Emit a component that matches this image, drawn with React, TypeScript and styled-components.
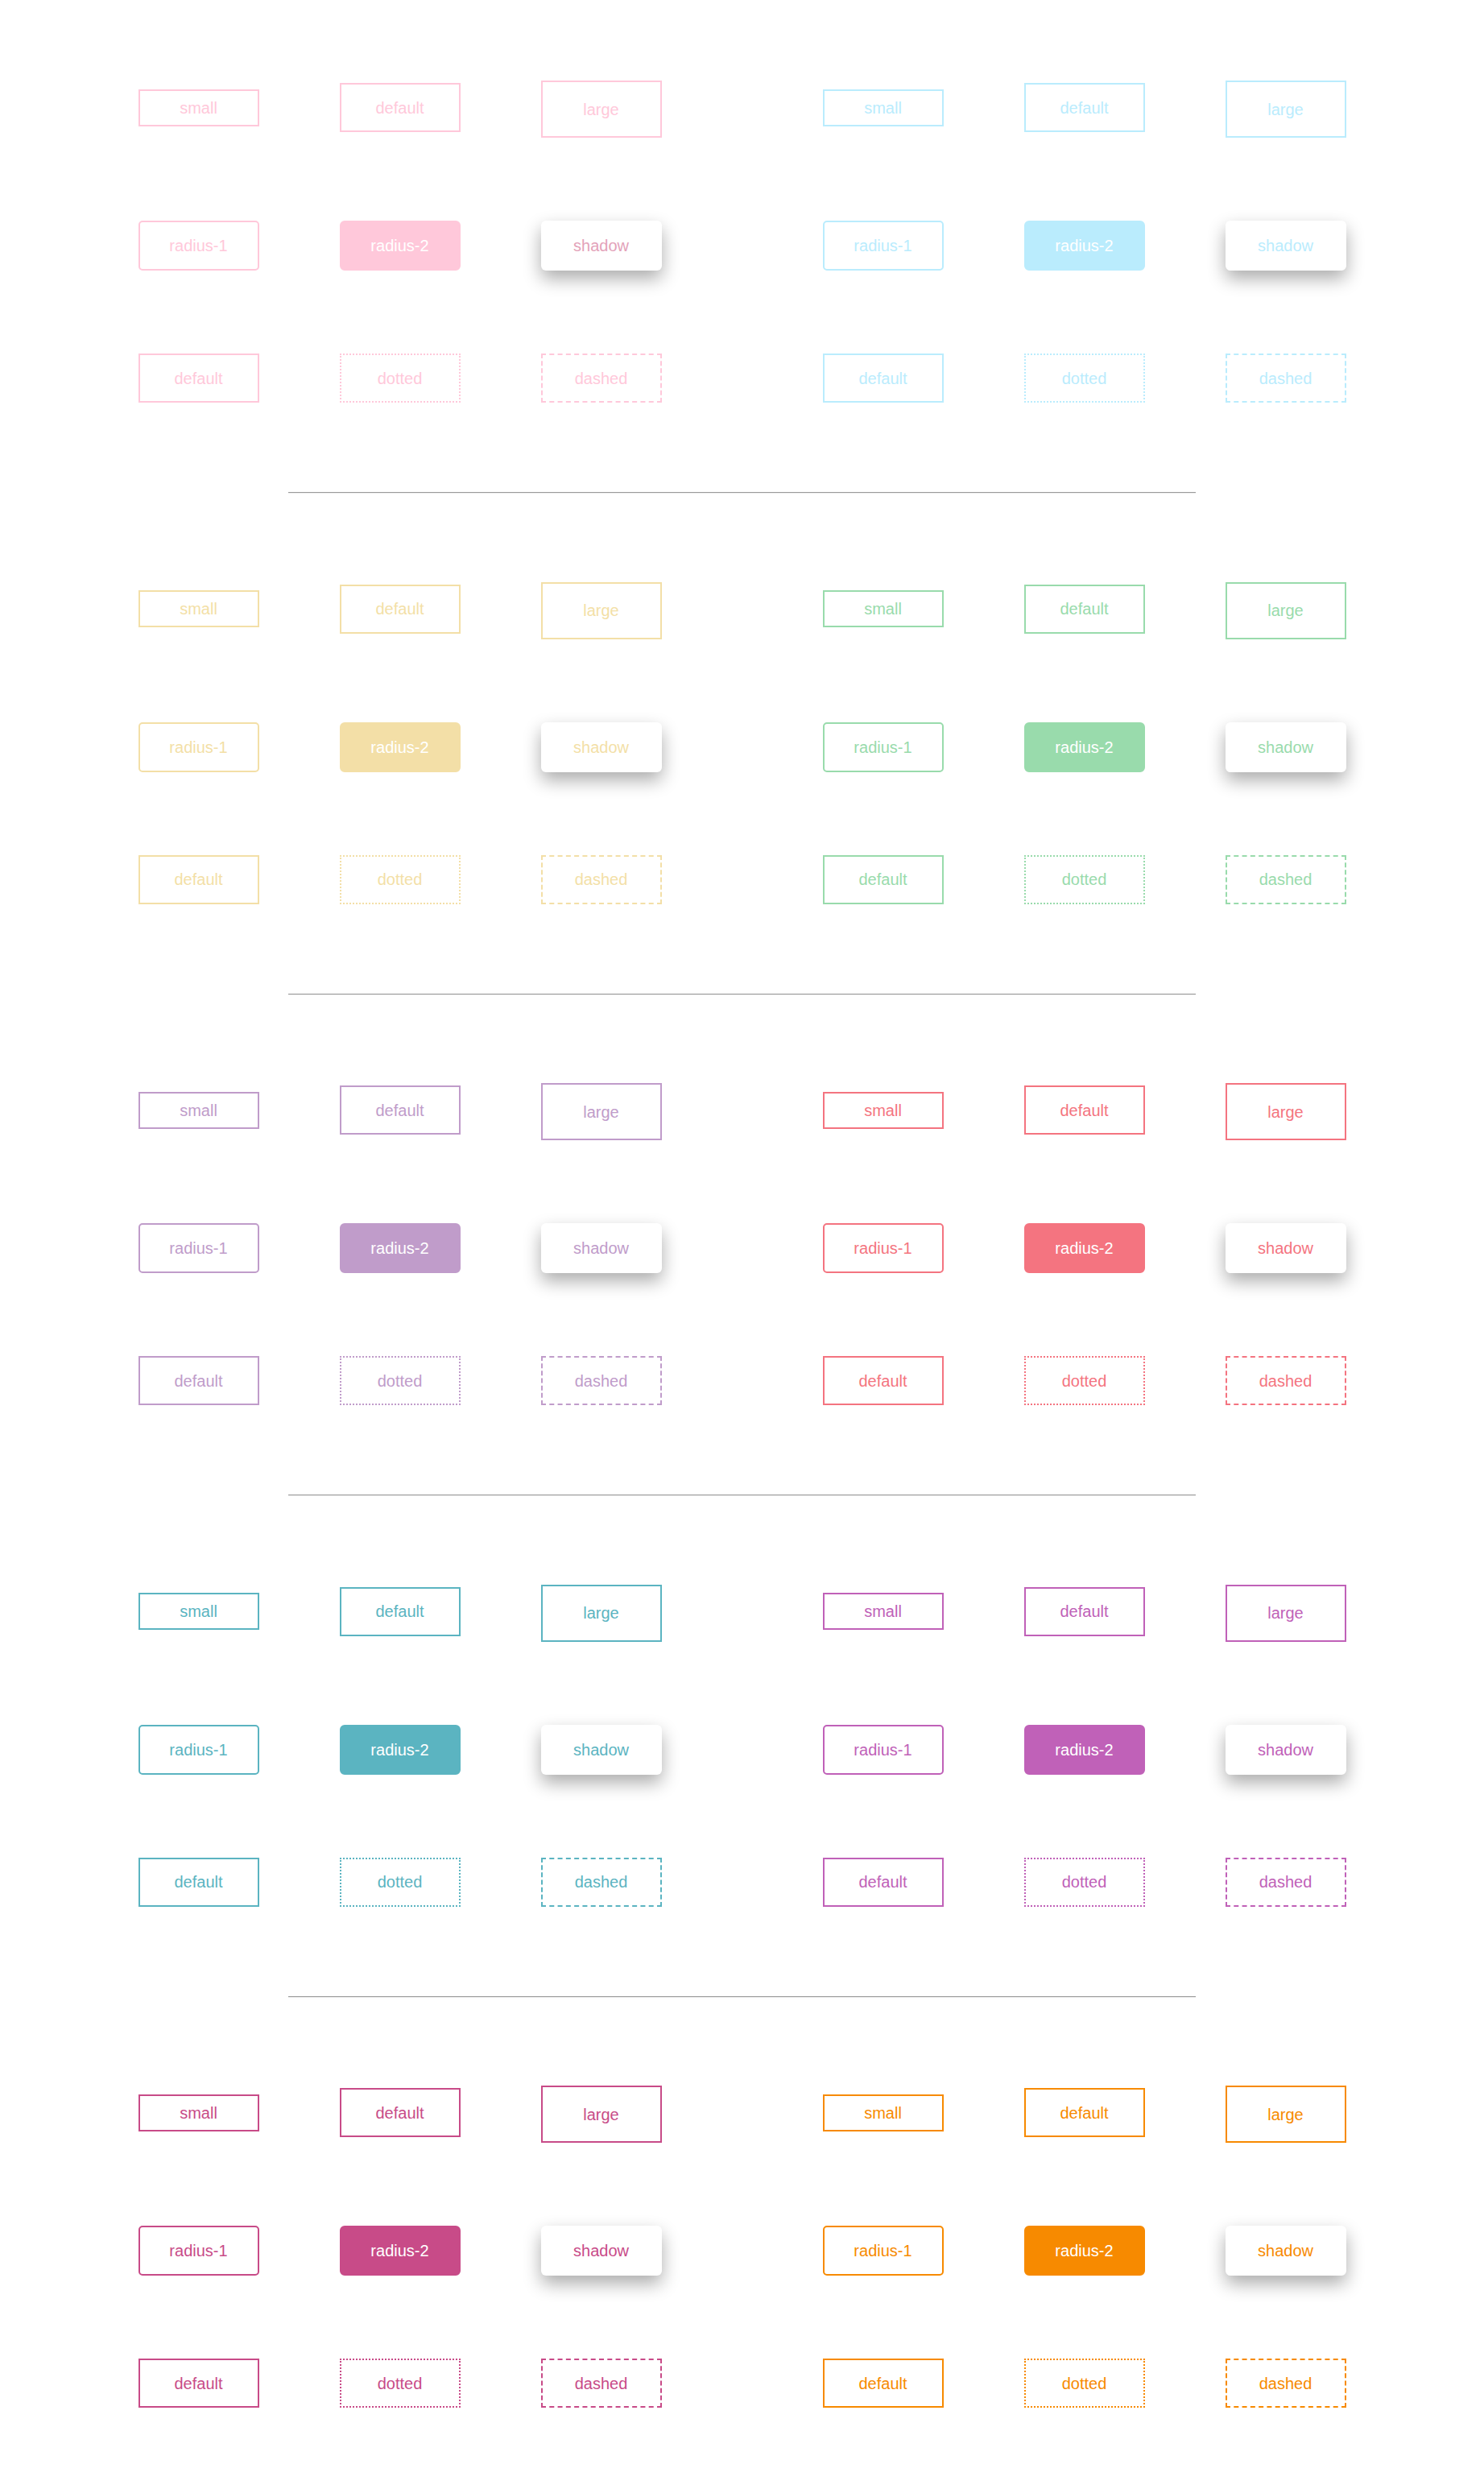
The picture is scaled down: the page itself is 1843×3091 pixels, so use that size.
import React, { Fragment } from "react";
import styled, { createGlobalStyle, css } from "styled-components";

const GlobalStyle = createGlobalStyle`
  html, body { margin: 0; padding: 0; background: #ffffff; }
  body { font-family: "Liberation Sans", Arial, sans-serif; }
`;

type Size = "sm" | "md" | "mdr" | "lg";
type Variant = "outline" | "radius1" | "fill" | "shadow" | "dotted" | "dashed";

interface Palette {
  main: string;
  shadowText?: string;
}

const palettes: [Palette, Palette][] = [
  [{ main: "#ffc8da", shadowText: "#e3a2b9" }, { main: "#baecfd" }],
  [{ main: "#f3dfa7" }, { main: "#99dbac" }],
  [{ main: "#c09cca" }, { main: "#f47480" }],
  [{ main: "#5bb4c1" }, { main: "#c061b8" }],
  [{ main: "#c84b88" }, { main: "#f78a00" }],
];

const heights: Record<Size, number> = { sm: 46, md: 61, mdr: 62, lg: 71 };

const Page = styled.main`
  padding: 96px 0 100px;
`;

const Section = styled.section`
  width: 1500px;
  margin: 0 auto;
  display: flex;
  justify-content: space-between;
`;

const Group = styled.div`
  display: grid;
  grid-template-columns: repeat(3, 150px);
  grid-template-rows: 75px 63px 61px;
  column-gap: 100px;
  row-gap: 102.5px;
  align-items: center;
`;

const Divider = styled.hr`
  width: 1127px;
  height: 0;
  margin: 111px auto 105.6px;
  border: none;
  border-top: 1px solid #9a9a9a;
  border-bottom: 1px solid #ececec;
`;

const Button = styled.button<{ $c: string; $shadowText?: string; $size: Size; $variant: Variant }>`
  box-sizing: border-box;
  width: 150px;
  height: ${(p) => heights[p.$size]}px;
  margin-top: ${(p) => (p.$size === "lg" ? 4 : 0)}px;
  padding: 1px 0 0;
  font-family: "Liberation Sans", Arial, sans-serif;
  font-size: 20px;
  line-height: 23px;
  color: ${(p) => p.$c};
  background: #ffffff;
  border: 2px solid ${(p) => p.$c};
  border-radius: 0;
  cursor: pointer;
  display: flex;
  align-items: center;
  justify-content: center;

  ${(p) =>
    p.$variant === "radius1" &&
    css`
      border-radius: 5px;
    `}
  ${(p) =>
    p.$variant === "fill" &&
    css`
      border-radius: 6px;
      background: ${p.$c};
      color: #ffffff;
    `}
  ${(p) =>
    p.$variant === "shadow" &&
    css`
      border: none;
      border-radius: 6px;
      color: ${p.$shadowText ?? p.$c};
      box-shadow: 0 10px 22px rgba(0, 0, 0, 0.33);
    `}
  ${(p) =>
    p.$variant === "dotted" &&
    css`
      border-style: dotted;
    `}
  ${(p) =>
    p.$variant === "dashed" &&
    css`
      border-style: dashed;
    `}
`;

const items: { label: string; size: Size; variant: Variant }[] = [
  { label: "small", size: "sm", variant: "outline" },
  { label: "default", size: "md", variant: "outline" },
  { label: "large", size: "lg", variant: "outline" },
  { label: "radius-1", size: "mdr", variant: "radius1" },
  { label: "radius-2", size: "mdr", variant: "fill" },
  { label: "shadow", size: "mdr", variant: "shadow" },
  { label: "default", size: "md", variant: "outline" },
  { label: "dotted", size: "md", variant: "dotted" },
  { label: "dashed", size: "md", variant: "dashed" },
];

function ButtonGroup({ palette }: { palette: Palette }) {
  return (
    <Group>
      {items.map((it, i) => (
        <Button
          key={i}
          $c={palette.main}
          $shadowText={palette.shadowText}
          $size={it.size}
          $variant={it.variant}
        >
          {it.label}
        </Button>
      ))}
    </Group>
  );
}

export default function App() {
  return (
    <>
      <GlobalStyle />
      <Page>
        {palettes.map((pair, i) => (
          <Fragment key={i}>
            <Section>
              <ButtonGroup palette={pair[0]} />
              <ButtonGroup palette={pair[1]} />
            </Section>
            {i < palettes.length - 1 && <Divider />}
          </Fragment>
        ))}
      </Page>
    </>
  );
}
